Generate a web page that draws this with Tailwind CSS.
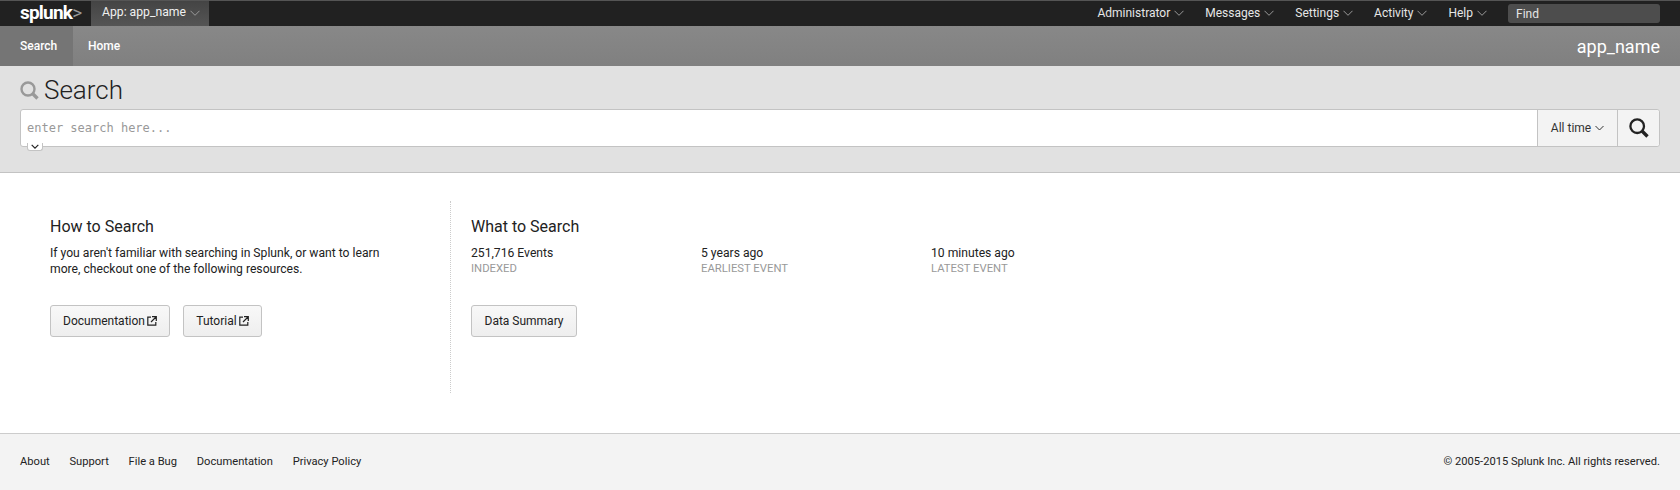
<!DOCTYPE html>
<html lang="en">
<head>
    <meta charset="UTF-8">
    <title>Search | Splunk</title>
    <script src="https://cdn.jsdelivr.net/npm/@tailwindcss/browser@4"></script>
</head>
<body class="bg-white text-[#333] font-['Roboto',sans-serif] text-[12px] h-[490px] overflow-hidden flex flex-col">

    <!-- account bar -->
    <header class="h-[26px] bg-[#212121] border-t border-[#555] flex items-stretch text-[#e6e6e6] text-[12px]">
        <a href="#" class="w-[91px] pl-[20px] flex items-center text-white font-bold text-[19px] tracking-[-0.8px] leading-none pb-[3px]">splunk<span class="text-[#999] font-normal">&gt;</span></a>
        <a href="#" class="w-[118px] pl-[11px] pb-[2px] flex items-center gap-[4px] bg-gradient-to-b from-[#444] to-[#555] text-[#f0f0f0] text-[12.2px]">App: app_name
            <svg class="w-[10px] h-[6px] text-[#999]" viewBox="0 0 10 6" fill="none" stroke="currentColor"><path d="M.5 .8l4.5 4.5 4.5-4.5"/></svg>
        </a>
        <nav class="ml-auto flex items-center pr-[20px]">
            <a href="#" class="flex items-center gap-[4px] mr-[21px] mb-[2px]">Administrator
                <svg class="w-[10px] h-[6px] text-[#999]" viewBox="0 0 10 6" fill="none" stroke="currentColor"><path d="M.5 .8l4.5 4.5 4.5-4.5"/></svg></a>
            <a href="#" class="flex items-center gap-[4px] mr-[21px] mb-[2px]">Messages
                <svg class="w-[10px] h-[6px] text-[#999]" viewBox="0 0 10 6" fill="none" stroke="currentColor"><path d="M.5 .8l4.5 4.5 4.5-4.5"/></svg></a>
            <a href="#" class="flex items-center gap-[4px] mr-[21px] mb-[2px]">Settings
                <svg class="w-[10px] h-[6px] text-[#999]" viewBox="0 0 10 6" fill="none" stroke="currentColor"><path d="M.5 .8l4.5 4.5 4.5-4.5"/></svg></a>
            <a href="#" class="flex items-center gap-[4px] mr-[21px] mb-[2px]">Activity
                <svg class="w-[10px] h-[6px] text-[#999]" viewBox="0 0 10 6" fill="none" stroke="currentColor"><path d="M.5 .8l4.5 4.5 4.5-4.5"/></svg></a>
            <a href="#" class="flex items-center gap-[4px] mr-[21px] mb-[2px]">Help
                <svg class="w-[10px] h-[6px] text-[#999]" viewBox="0 0 10 6" fill="none" stroke="currentColor"><path d="M.5 .8l4.5 4.5 4.5-4.5"/></svg></a>
            <div class="w-[152px] h-[19px] rounded-[3px] bg-[#4d4d4d] pl-[8px] flex items-center text-[#e6e6e6]">Find</div>
        </nav>
    </header>

    <!-- app bar -->
    <div class="h-[40px] bg-gradient-to-b from-[#888] to-[#808080] flex items-stretch text-white font-medium text-[12px]">
        <a href="#" class="w-[73px] pl-[20px] flex items-center bg-[#757575]">Search</a>
        <a href="#" class="w-[60px] pl-[15px] flex items-center">Home</a>
        <div class="ml-auto pr-[20px] flex items-center text-[18px] font-normal">app_name</div>
    </div>

    <!-- search header -->
    <section class="h-[107px] bg-[#e1e1e1] border-b border-[#c3c3c3] px-[20px] pt-[8px]">
        <div class="flex items-center h-[32px] gap-[5px]">
            <svg class="w-[19px] h-[19px] text-[#999]" viewBox="0 0 19 19" fill="none" stroke="currentColor"><circle cx="8" cy="8" r="6.5" stroke-width="2.4"/><path d="M12.5 12.5l5 5" stroke-width="3.4"/></svg>
            <h1 class="text-[26px] font-light leading-none text-[#222]">Search</h1>
        </div>
        <div class="relative mt-[3px] h-[38px] flex bg-white border border-[#c3c3c3] rounded-[3px]">
            <div class="flex-1 pl-[6px] flex items-center font-['DejaVu_Sans_Mono',monospace] text-[12px] text-[#999]">enter search here...</div>
            <div class="w-[80px] border-l border-[#c3c3c3] bg-[#f3f3f3] flex items-center justify-center gap-[4px] text-[#333]">All time
                <svg class="w-[9px] h-[6px] text-[#333]" viewBox="0 0 9 6" fill="none" stroke="currentColor"><path d="M.5 1l4 4 4-4"/></svg>
            </div>
            <div class="w-[42px] border-l border-[#c3c3c3] bg-[#f3f3f3] rounded-r-[3px] flex items-center justify-center">
                <svg class="w-[20px] h-[20px] text-[#222]" viewBox="0 0 20 20" fill="none" stroke="currentColor"><circle cx="8.2" cy="8.2" r="6.8" stroke-width="2.3"/><path d="M13 13l5.5 5.5" stroke-width="3.4"/></svg>
            </div>
            <div class="absolute left-[6px] top-[33px] w-[16px] h-[8px] bg-white border border-t-0 border-[#c3c3c3] rounded-b-[3px] flex items-center justify-center">
                <svg class="w-[8px] h-[5px] text-[#222]" viewBox="0 0 9 6" fill="none" stroke="currentColor" stroke-width="1.4"><path d="M.5 1l4 4 4-4"/></svg>
            </div>
        </div>
    </section>

    <!-- getting started -->
    <main class="flex-1 flex pt-[28px] items-start">
        <div class="w-[451px] h-[192px] pl-[50px] pt-[16px] border-r border-dotted border-[#ccc]">
            <h2 class="text-[16px] leading-[20px] text-[#222]">How to Search</h2>
            <p class="mt-[8px] w-[345px] text-[12.15px] leading-[16px] text-[#222]">If you aren't familiar with searching in Splunk, or want to learn more, checkout one of the following resources.</p>
            <div class="mt-[28px] flex gap-[13px] text-[#222]">
                <a href="#" class="h-[32px] w-[120px] flex items-center justify-center gap-[2px] rounded-[3px] border border-[#c3c3c3] bg-gradient-to-b from-[#f8f8f8] to-[#eee]">Documentation
                    <svg class="w-[10px] h-[10px]" viewBox="0 0 10 10" fill="none" stroke="currentColor" stroke-width="1.2"><path d="M4 1.2H.8v8h8V6M5 .7h4.3V5M9 1L4 6"/></svg></a>
                <a href="#" class="h-[32px] w-[79px] flex items-center justify-center gap-[2px] rounded-[3px] border border-[#c3c3c3] bg-gradient-to-b from-[#f8f8f8] to-[#eee]">Tutorial
                    <svg class="w-[10px] h-[10px]" viewBox="0 0 10 10" fill="none" stroke="currentColor" stroke-width="1.2"><path d="M4 1.2H.8v8h8V6M5 .7h4.3V5M9 1L4 6"/></svg></a>
            </div>
        </div>
        <div class="pl-[20px] pt-[16px]">
            <h2 class="text-[16px] leading-[20px] text-[#222]">What to Search</h2>
            <div class="mt-[8px] grid grid-cols-[230px_230px_230px] text-[12.15px] leading-[16px] text-[#222]">
                <div>251,716 Events<div class="text-[#999] text-[11.3px]">INDEXED</div></div>
                <div>5 years ago<div class="text-[#999] text-[11.3px]">EARLIEST EVENT</div></div>
                <div>10 minutes ago<div class="text-[#999] text-[11.3px]">LATEST EVENT</div></div>
            </div>
            <a href="#" class="mt-[28px] h-[32px] w-[106px] flex items-center justify-center rounded-[3px] border border-[#c3c3c3] bg-gradient-to-b from-[#f8f8f8] to-[#eee] text-[#222]">Data Summary</a>
        </div>
    </main>

    <!-- footer -->
    <footer class="h-[57px] bg-[#f3f3f3] border-t border-[#ccc] px-[20px] flex items-center justify-between text-[#222] text-[11.15px]">
        <nav class="flex gap-[19.8px]">
            <a href="#">About</a>
            <a href="#">Support</a>
            <a href="#">File a Bug</a>
            <a href="#">Documentation</a>
            <a href="#">Privacy Policy</a>
        </nav>
        <p>&copy; 2005-2015 Splunk Inc. All rights reserved.</p>
    </footer>

</body>
</html>
